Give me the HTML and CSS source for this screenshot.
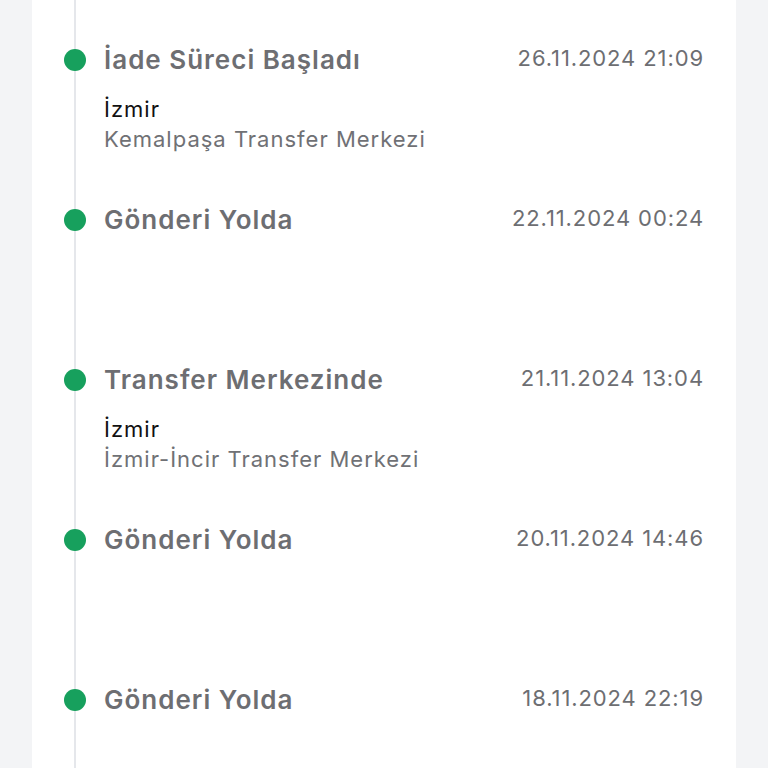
FILE: index.html
```html
<!DOCTYPE html>
<html lang="tr">
<head>
<meta charset="utf-8">
<title>Gönderi Hareketleri</title>
<link rel="stylesheet" href="styles.css">
</head>
<body>
<main class="card">
  <ol class="timeline">
    <li class="event">
      <span class="dot"></span>
      <div class="info">
        <div class="title">İade Süreci Başladı</div>
        <div class="place">
          <div class="city">İzmir</div>
          <div class="center">Kemalpaşa Transfer Merkezi</div>
        </div>
      </div>
      <time class="date">26.11.2024 21:09</time>
    </li>
    <li class="event">
      <span class="dot"></span>
      <div class="info">
        <div class="title">Gönderi Yolda</div>
      </div>
      <time class="date">22.11.2024 00:24</time>
    </li>
    <li class="event">
      <span class="dot"></span>
      <div class="info">
        <div class="title">Transfer Merkezinde</div>
        <div class="place">
          <div class="city">İzmir</div>
          <div class="center">İzmir-İncir Transfer Merkezi</div>
        </div>
      </div>
      <time class="date">21.11.2024 13:04</time>
    </li>
    <li class="event">
      <span class="dot"></span>
      <div class="info">
        <div class="title">Gönderi Yolda</div>
      </div>
      <time class="date">20.11.2024 14:46</time>
    </li>
    <li class="event">
      <span class="dot"></span>
      <div class="info">
        <div class="title">Gönderi Yolda</div>
      </div>
      <time class="date">18.11.2024 22:19</time>
    </li>
  </ol>
</main>
</body>
</html>
```

FILE: styles.css
```css
html, body {
  margin: 0;
  padding: 0;
}

body {
  background: #f3f4f6;
  font-family: Inter, "Noto Sans", sans-serif;
  height: 768px;
  overflow: hidden;
}

.card {
  margin: 0 32px;
  background: #ffffff;
  min-height: 768px;
  padding: 0 33px 0 42px;
  box-sizing: border-box;
}

.timeline {
  list-style: none;
  margin: 0;
  padding: 44px 0 0 0;
  border-left: 2px solid #e5e7eb;
  min-height: 768px;
  box-sizing: border-box;
}

.event {
  display: grid;
  grid-template-columns: 22px 1fr auto;
  column-gap: 18px;
  align-items: start;
  min-height: 160px;
  margin-left: -12px;
}

.dot {
  width: 22px;
  height: 22px;
  border-radius: 50%;
  background: #17a05d;
  margin-top: 5px;
}

.title {
  font-size: 26px;
  line-height: 32px;
  font-weight: 600;
  letter-spacing: 1px;
  color: #6d6e72;
}

.place {
  margin-top: 18px;
  font-size: 22px;
  line-height: 30px;
  letter-spacing: 1px;
}

.city {
  color: #111111;
}

.center {
  color: #707175;
}

.date {
  margin-top: 2px;
  margin-right: -1px;
  font-size: 22px;
  line-height: 24px;
  letter-spacing: 0.9px;
  color: #6d6e72;
  white-space: nowrap;
}
```
